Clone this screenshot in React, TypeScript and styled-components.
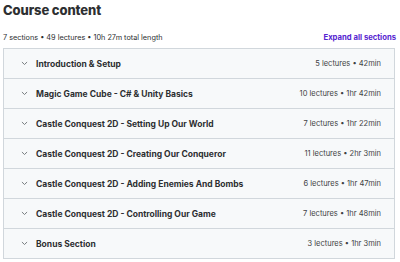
import styled, { createGlobalStyle } from "styled-components"

type Section = {
    title: string
    lectures: number
    length: string
}

const sections: Section[] = [
    { title: "Introduction & Setup", lectures: 5, length: "42min" },
    { title: "Magic Game Cube - C# & Unity Basics", lectures: 10, length: "1hr 42min" },
    { title: "Castle Conquest 2D - Setting Up Our World", lectures: 7, length: "1hr 22min" },
    { title: "Castle Conquest 2D - Creating Our Conqueror", lectures: 11, length: "2hr 3min" },
    { title: "Castle Conquest 2D - Adding Enemies And Bombs", lectures: 6, length: "1hr 47min" },
    { title: "Castle Conquest 2D - Controlling Our Game", lectures: 7, length: "1hr 48min" },
    { title: "Bonus Section", lectures: 3, length: "1hr 3min" },
]

const GlobalStyle = createGlobalStyle`
    html, body {
        margin: 0;
        padding: 0;
        background: #ffffff;
    }
    body {
        font-family: Inter, "Noto Sans", sans-serif;
        color: #2d2f31;
    }
`

const Chevron = () => (
    <svg width="7" height="5" viewBox="0 0 7 5" fill="none">
        <path d="M1.2 1.3 L3.5 3.5 L5.8 1.3" stroke="#6a6f73" strokeWidth="0.9" strokeLinecap="round" strokeLinejoin="round" />
    </svg>
)

export default function App() {
    return (
        <Page>
            <GlobalStyle />
            <Title>Course content</Title>
            <MetaBar>
                <Meta>7 sections • 49 lectures • 10h 27m total length</Meta>
                <ExpandLink>Expand all sections</ExpandLink>
            </MetaBar>
            <SectionList>
                {sections.map((s) => (
                    <SectionRow key={s.title}>
                        <ChevronBox><Chevron /></ChevronBox>
                        <SectionTitle>{s.title}</SectionTitle>
                        <SectionInfo>{s.lectures} lectures • {s.length}</SectionInfo>
                    </SectionRow>
                ))}
            </SectionList>
        </Page>
    )
}

const Page = styled.div`
    width: 392px;
    padding: 0 5px 0 3px;
`

const Title = styled.h2`
    margin: 0;
    padding-top: 1px;
    font-size: 13px;
    line-height: 18px;
    font-weight: 800;
    letter-spacing: -0.1px;
    color: #2d2f31;
`

const MetaBar = styled.div`
    display: flex;
    justify-content: space-between;
    align-items: center;
    height: 12px;
    margin-top: 12px;
    margin-bottom: 5px;
`

const Meta = styled.span`
    font-size: 7.3px;
    color: #2d2f31;
`

const ExpandLink = styled.span`
    font-size: 7.7px;
    font-weight: 700;
    color: #5624d0;
    margin-right: -1px;
`

const SectionList = styled.div`
    border: 1px solid #d1d7dc;
    border-bottom: none;
`

const SectionRow = styled.div`
    display: flex;
    align-items: center;
    height: 29px;
    padding: 0 13px 0 17px;
    background: #f7f9fa;
    border-bottom: 1px solid #d1d7dc;
`

const ChevronBox = styled.div`
    display: flex;
    align-items: center;
    width: 15px;
`

const SectionTitle = styled.span`
    flex: 1;
    font-size: 8.5px;
    font-weight: 700;
    color: #2d2f31;
`

const SectionInfo = styled.span`
    font-size: 7.5px;
    color: #3e4143;
`
